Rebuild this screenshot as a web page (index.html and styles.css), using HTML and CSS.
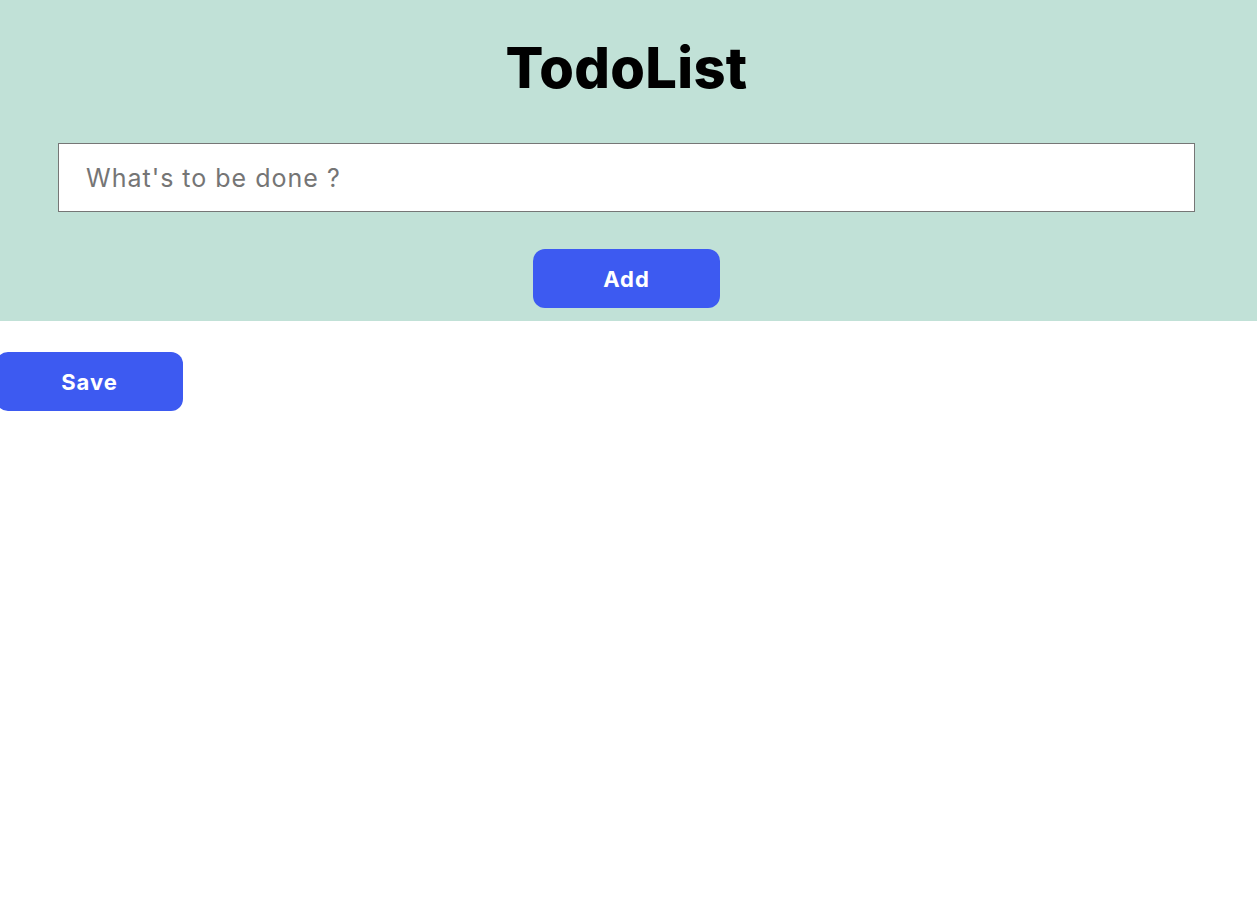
FILE: index.html
```html
<!DOCTYPE html>
<html lang="en">
<head>
<meta charset="utf-8">
<title>TodoList</title>
<link rel="stylesheet" href="styles.css">
</head>
<body>
<header class="top">
  <h1 class="title">TodoList</h1>
  <div class="field-row">
    <input class="task-input" type="text" placeholder="What's to be done ?">
  </div>
  <button class="btn btn-add">Add</button>
</header>
<main class="content">
  <button class="btn btn-save">Save</button>
</main>
</body>
</html>
```

FILE: styles.css
```css
* { box-sizing: border-box; }
html, body { margin: 0; padding: 0; background: #fff; }
body { font-family: "Inter", "Open Sans", sans-serif; }

.top {
  background: #c1e1d7;
  height: 321px;
  display: flex;
  flex-direction: column;
  align-items: center;
  padding-top: 34px;
  padding-right: 4px;
}

.title {
  margin: 0;
  font-size: 56px;
  font-weight: 800;
  line-height: 68px;
  color: #000;
  letter-spacing: 0.3px;
}

.field-row {
  align-self: stretch;
  padding-left: 58px;
  margin-top: 41px;
}

.task-input {
  display: block;
  width: 1137px;
  height: 69px;
  border: 1px solid #767676;
  background: #fff;
  padding: 0 0 0 27px;
  font-family: "Inter", "Open Sans", sans-serif;
  font-size: 25px;
  letter-spacing: 1px;
  color: #333;
  outline: none;
}
.task-input::placeholder { color: #757575; }

.btn {
  width: 187px;
  height: 59px;
  border: none;
  border-radius: 12px;
  background: #3d5af1;
  color: #fff;
  font-family: "Inter", "Open Sans", sans-serif;
  font-weight: 700;
  font-size: 22px;
  letter-spacing: 1px;
  cursor: pointer;
}

.btn-add { margin-top: 37px; }

.content { padding-top: 31px; }
.btn-save { display: block; margin-left: -4px; }
```
